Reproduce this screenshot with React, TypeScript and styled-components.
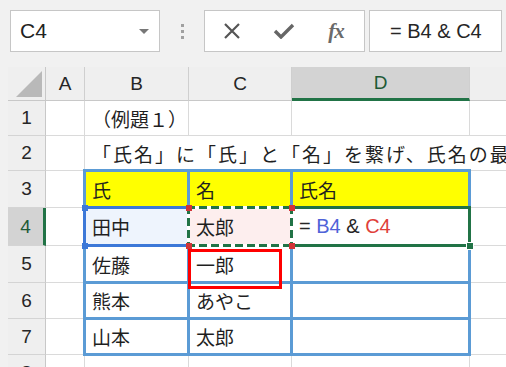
import React from "react";
import styled, { createGlobalStyle, css } from "styled-components";

const cjk = `"Noto Sans CJK JP", "Noto Sans", sans-serif`;
const latin = `"Liberation Sans", Arial, sans-serif`;
const green = "#217346";

const GlobalStyle = createGlobalStyle`
  html, body { margin: 0; padding: 0; background: #f1f1f1; }
  body { font-family: ${latin}; }
`;

const Screen = styled.div`
  width: 506px;
  height: 367px;
  overflow: hidden;
  background: #f1f1f1;
  display: flex;
  flex-direction: column;
`;

// formula bar
const FormulaBar = styled.div`
  display: flex;
  height: 42px;
  padding: 10px 0 15px 10px;
  flex-shrink: 0;
`;

const NameBox = styled.div`
  box-sizing: border-box;
  width: 150px;
  background: #fff;
  border: 1px solid #c6c6c6;
  display: flex;
  align-items: center;
  justify-content: space-between;
  padding: 0 10px 0 9px;
  font-size: 21px;
  color: #222;
`;

const Caret = styled.span`
  width: 0;
  height: 0;
  border-left: 5px solid transparent;
  border-right: 5px solid transparent;
  border-top: 5px solid #777;
`;

const Grip = styled.div`
  width: 44px;
  display: flex;
  flex-direction: column;
  align-items: center;
  justify-content: center;
  gap: 3px;
`;

const GripDot = styled.span`
  width: 3px;
  height: 3px;
  background: #a0a0a0;
`;

const ButtonBox = styled.div`
  box-sizing: border-box;
  width: 161px;
  background: #fff;
  border: 1px solid #c6c6c6;
  display: flex;
  align-items: center;
  padding-left: 1px;
`;

const IconSlot = styled.span`
  width: 52px;
  display: flex;
  justify-content: center;
  align-items: center;
  color: #5a5a5a;
`;

const Fx = styled.span`
  font-family: "Liberation Serif", serif;
  font-style: italic;
  font-weight: bold;
  font-size: 21px;
  color: #6a6a6a;
  letter-spacing: -1px;
`;

const FormulaInput = styled.div`
  box-sizing: border-box;
  flex: 1;
  margin: 0 4px 0 4px;
  background: #fff;
  border: 1px solid #c6c6c6;
  display: flex;
  align-items: center;
  padding-left: 20px;
  font-size: 20px;
  color: #262626;
  white-space: pre;
`;

// sheet
const Sheet = styled.div`
  display: grid;
  margin-left: 8px;
  grid-template-columns: 38px 39px 104px 103px 178px 120px;
  grid-template-rows: 34px 35px 35px 37px 38px 37px 36px 36px 36px;
`;

const Corner = styled.div`
  box-sizing: border-box;
  background: #efefef;
  border-right: 1px solid #c8c8c8;
  border-bottom: 1px solid #c8c8c8;
  display: flex;
  align-items: flex-end;
  justify-content: flex-end;
  padding: 0 3px 3px 0;
`;

const ColHeader = styled.div<{ $active?: boolean }>`
  box-sizing: border-box;
  background: ${p => (p.$active ? "#d3d3d3" : "#efefef")};
  border-right: 1px solid #cfcfcf;
  border-bottom: ${p => (p.$active ? `3px solid ${green}` : "1px solid #c8c8c8")};
  display: flex;
  align-items: center;
  justify-content: center;
  font-size: 19px;
  color: ${p => (p.$active ? "#1d5a36" : "#262626")};
`;

const RowHeader = styled.div<{ $active?: boolean }>`
  box-sizing: border-box;
  background: ${p => (p.$active ? "#d3d3d3" : "#efefef")};
  border-right: ${p => (p.$active ? `3px solid ${green}` : "1px solid #c8c8c8")};
  border-bottom: 1px solid #d4d4d4;
  display: flex;
  align-items: center;
  justify-content: center;
  font-size: 19px;
  color: ${p => (p.$active ? "#1d5a36" : "#262626")};
`;

const Cell = styled.div<{ $bg?: string; $table?: boolean; $span?: boolean }>`
  position: relative;
  box-sizing: border-box;
  display: flex;
  align-items: center;
  padding-left: 7px;
  background: ${p => p.$bg ?? "#fff"};
  border-right: 1px solid #dadada;
  border-bottom: 1px solid #dadada;
  font-family: ${cjk};
  font-size: 19px;
  color: #1f1f1f;
  white-space: nowrap;
  overflow: visible;
  ${p => p.$span && css`grid-column: 3 / -1; overflow: hidden; letter-spacing: 2px;`}
  ${p =>
    p.$table &&
    css`
      &::after {
        content: "";
        position: absolute;
        inset: -2px;
        border: 3px solid #5b9bd5;
        z-index: 1;
        pointer-events: none;
      }
    `}
`;

const Frame = styled.span<{ $color: string; $z: number }>`
  position: absolute;
  inset: -2px;
  border: 3px solid ${p => p.$color};
  z-index: ${p => p.$z};
  pointer-events: none;
`;

const dash = (dir: string) =>
  `repeating-linear-gradient(${dir}, ${green} 0 8px, #ffffff 8px 12px)`;

const MarchingAnts = styled.span`
  position: absolute;
  inset: -2px;
  z-index: 4;
  pointer-events: none;
  background:
    ${dash("90deg")} top left / 100% 3px no-repeat,
    ${dash("90deg")} bottom left / 100% 3px no-repeat,
    ${dash("180deg")} top left / 3px 100% no-repeat,
    ${dash("180deg")} top right / 3px 100% no-repeat;
`;

const Handle = styled.span<{ $color: string; $v: "top" | "bottom"; $h: "left" | "right" }>`
  position: absolute;
  width: 6px;
  height: 6px;
  background: ${p => p.$color};
  ${p => (p.$v === "top" ? "top: -3px;" : "bottom: -4px;")}
  ${p => (p.$h === "left" ? "left: -3px;" : "right: -4px;")}
  z-index: 5;
`;

const FillHandle = styled.span`
  position: absolute;
  width: 6px;
  height: 6px;
  right: -5px;
  bottom: -5px;
  background: ${green};
  border: 1px solid #fff;
  z-index: 5;
`;

const Annotation = styled.span`
  position: absolute;
  box-sizing: border-box;
  left: -1px;
  top: 3px;
  width: 94px;
  height: 40px;
  border: 3px solid #ff0000;
  z-index: 6;
  pointer-events: none;
`;

const Formula = styled.span`
  font-family: ${latin};
  font-size: 20px;
  white-space: pre;
  color: #262626;
`;

const Ref = styled.span<{ $color: string }>`
  color: ${p => p.$color};
`;

const XIcon = () => (
  <svg width="20" height="20" viewBox="0 0 20 20">
    <path d="M3 3 L17 17 M17 3 L3 17" stroke="#555" strokeWidth="2.2" fill="none" />
  </svg>
);

const CheckIcon = () => (
  <svg width="22" height="16" viewBox="0 0 22 16">
    <path d="M2 8 L8 14 L20 2" stroke="#666" strokeWidth="3.4" fill="none" strokeLinejoin="miter" />
  </svg>
);

const cols = ["A", "B", "C", "D"];

type Row = { n: number; cells: React.ReactNode };

const App = () => {
  const blue = "#3c78d8";
  const red = "#d13438";

  const rows: Row[] = [
    {
      n: 1,
      cells: (
        <>
          <Cell />
          <Cell>（例題１）</Cell>
          <Cell />
          <Cell />
          <Cell />
        </>
      ),
    },
    {
      n: 2,
      cells: (
        <>
          <Cell />
          <Cell $span>「氏名」に「氏」と「名」を繋げ、氏名の最</Cell>
        </>
      ),
    },
    {
      n: 3,
      cells: (
        <>
          <Cell />
          <Cell $table $bg="#ffff00">氏</Cell>
          <Cell $table $bg="#ffff00">名</Cell>
          <Cell $table $bg="#ffff00">氏名</Cell>
          <Cell />
        </>
      ),
    },
    {
      n: 4,
      cells: (
        <>
          <Cell />
          <Cell $table $bg="#eef4fd">
            田中
            <Frame $color={blue} $z={2} />
            <Handle $color={blue} $v="top" $h="left" />
            <Handle $color={blue} $v="bottom" $h="left" />
          </Cell>
          <Cell $table $bg="#fdeeee">
            太郎
            <MarchingAnts />
            <Handle $color={red} $v="top" $h="left" />
            <Handle $color={red} $v="bottom" $h="left" />
            <Handle $color={red} $v="top" $h="right" />
            <Handle $color={red} $v="bottom" $h="right" />
          </Cell>
          <Cell $table>
            <Formula>
              = <Ref $color="#5063d8">B4</Ref> &amp; <Ref $color="#e0403a">C4</Ref>
            </Formula>
            <Frame $color={green} $z={3} />
            <FillHandle />
          </Cell>
          <Cell />
        </>
      ),
    },
    {
      n: 5,
      cells: (
        <>
          <Cell />
          <Cell $table>佐藤</Cell>
          <Cell $table>
            一郎
            <Annotation />
          </Cell>
          <Cell $table />
          <Cell />
        </>
      ),
    },
    {
      n: 6,
      cells: (
        <>
          <Cell />
          <Cell $table>熊本</Cell>
          <Cell $table>あやこ</Cell>
          <Cell $table />
          <Cell />
        </>
      ),
    },
    {
      n: 7,
      cells: (
        <>
          <Cell />
          <Cell $table>山本</Cell>
          <Cell $table>太郎</Cell>
          <Cell $table />
          <Cell />
        </>
      ),
    },
    {
      n: 8,
      cells: (
        <>
          <Cell />
          <Cell />
          <Cell />
          <Cell />
          <Cell />
        </>
      ),
    },
  ];

  return (
    <Screen>
      <GlobalStyle />
      <FormulaBar>
        <NameBox>
          C4
          <Caret />
        </NameBox>
        <Grip>
          <GripDot />
          <GripDot />
          <GripDot />
        </Grip>
        <ButtonBox>
          <IconSlot>
            <XIcon />
          </IconSlot>
          <IconSlot>
            <CheckIcon />
          </IconSlot>
          <IconSlot>
            <Fx>fx</Fx>
          </IconSlot>
        </ButtonBox>
        <FormulaInput>= B4 &amp; C4</FormulaInput>
      </FormulaBar>
      <Sheet>
        <Corner>
          <svg width="26" height="26" viewBox="0 0 26 26">
            <polygon points="26,0 26,26 0,26" fill="#b9b9b9" />
          </svg>
        </Corner>
        {cols.map(c => (
          <ColHeader key={c} $active={c === "D"}>
            {c}
          </ColHeader>
        ))}
        <ColHeader />
        {rows.map(r => (
          <React.Fragment key={r.n}>
            <RowHeader $active={r.n === 4}>{r.n}</RowHeader>
            {r.cells}
          </React.Fragment>
        ))}
      </Sheet>
    </Screen>
  );
};

export default App;
